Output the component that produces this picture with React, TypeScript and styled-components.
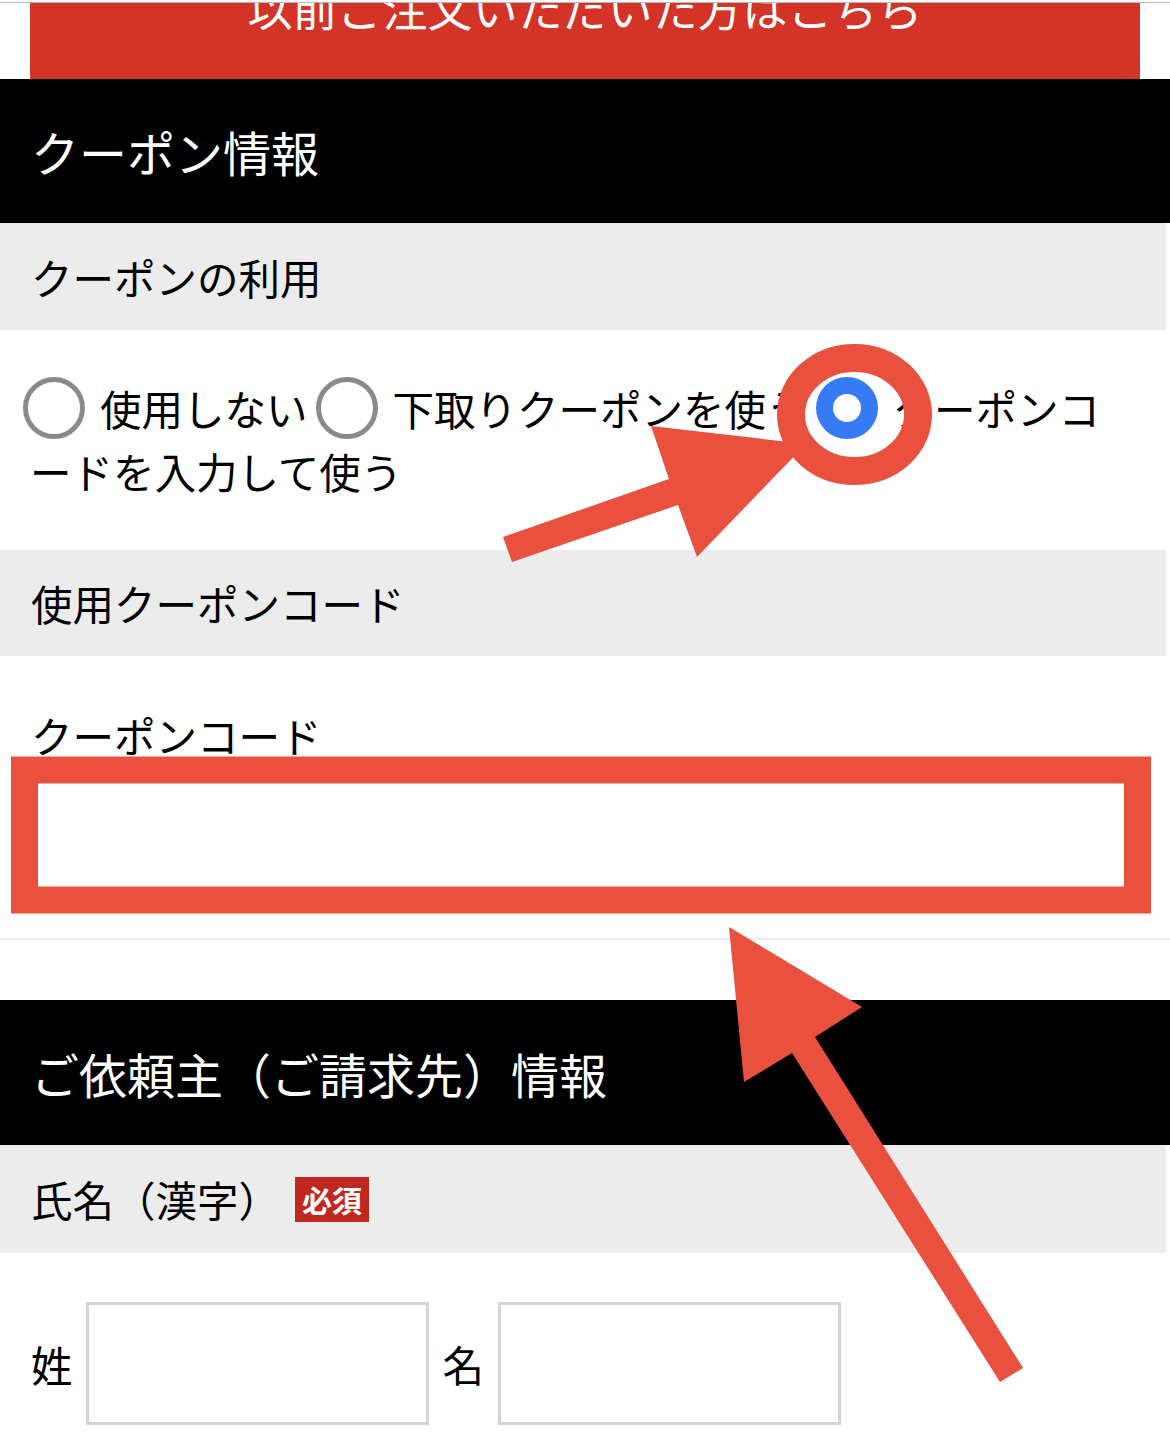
import styled, { createGlobalStyle } from 'styled-components'

const GlobalStyle = createGlobalStyle`
  html, body {
    margin: 0;
    padding: 0;
    overflow: hidden;
    background: #fff;
  }
  body {
    font-family: "Noto Sans CJK JP", "Noto Sans", sans-serif;
    color: #000;
  }
`

const Page = styled.div`
  position: relative;
  width: 1170px;
  height: 1437px;
  overflow: hidden;
  background: #fff;
`

const TopRule = styled.div`
  margin-top: 2px;
  height: 1px;
  background: #b8b8b8;
`

const ReorderButton = styled.div`
  margin: 0 30px;
  height: 76px;
  overflow: hidden;
  background: #d43327;
  color: #fff;
  text-align: center;
  font-size: 45px;
  line-height: 45px;
  white-space: nowrap;
`

const ReorderText = styled.span`
  display: block;
  margin-top: -18px;
`

const SectionHeader = styled.div<{ $height: number }>`
  display: flex;
  align-items: center;
  height: ${p => p.$height}px;
  padding-left: 31px;
  background: #000;
  color: #fff;
  font-size: 48px;
`

const FieldTitle = styled.div<{ $height: number }>`
  display: flex;
  align-items: center;
  height: ${p => p.$height}px;
  margin-right: 4px;
  padding-left: 31px;
  background: #ececec;
  font-size: 41.5px;
`

const RequiredBadge = styled.span`
  margin-left: 15px;
  padding: 0 7px;
  height: 45px;
  line-height: 45px;
  background: #c0271f;
  color: #fff;
  font-size: 30px;
  font-weight: 700;
`

const RadioGroup = styled.div`
  padding: 47px 35px 47px 30px;
  font-size: 41.5px;
  line-height: 63px;
  line-break: anywhere;
`

const RadioLabel = styled.label`
  cursor: pointer;
`

const Radio = styled.span<{ $checked?: boolean; $first?: boolean }>`
  display: inline-block;
  vertical-align: top;
  position: relative;
  box-sizing: border-box;
  width: 62px;
  height: 62px;
  margin: 0 15px 0 ${p => (p.$first ? '-7px' : '8px')};
  border-radius: 50%;
  border: ${p => (p.$checked ? 'none' : '5px solid #8a8a8a')};
  background: ${p => (p.$checked ? '#367bf5' : '#fff')};

  &::after {
    content: '';
    display: ${p => (p.$checked ? 'block' : 'none')};
    position: absolute;
    left: 17px;
    top: 17px;
    width: 28px;
    height: 28px;
    border-radius: 50%;
    background: #fff;
  }
`

const CodeSection = styled.div`
  padding: 48px 32px 38px 31px;
  border-bottom: 2px solid #ebebeb;
`

const FieldLabel = styled.div`
  font-size: 41.5px;
  line-height: 62px;
`

const CodeInput = styled.input`
  display: block;
  box-sizing: border-box;
  width: calc(100% + 12px);
  height: 130px;
  margin: 4px -6px 0;
  border: 2px solid #d0d0d0;
  background: #fff;
  font-size: 40px;
  outline: none;
`

const Spacer = styled.div`
  height: 60px;
`

const NameRow = styled.div`
  display: flex;
  align-items: center;
  gap: 13.5px;
  padding: 49px 0 0 31px;
  font-size: 41.5px;
`

const NameInput = styled.input`
  box-sizing: border-box;
  width: 343px;
  height: 123px;
  margin: 0;
  border: 3px solid #d4d4d4;
  background: #fff;
  font-size: 40px;
  outline: none;
`

const Annotations = styled.svg`
  position: absolute;
  left: 0;
  top: 0;
  pointer-events: none;
`

const MARK = '#e9503e'

export default function App() {
  return (
    <Page>
      <GlobalStyle />
      <TopRule />
      <ReorderButton>
        <ReorderText>以前ご注文いただいた方はこちら</ReorderText>
      </ReorderButton>

      <SectionHeader $height={144}>クーポン情報</SectionHeader>
      <FieldTitle $height={107}>クーポンの利用</FieldTitle>
      <RadioGroup>
        <RadioLabel><Radio $first />使用しない</RadioLabel>
        <RadioLabel><Radio />下取りクーポンを使う</RadioLabel>
        <RadioLabel><Radio $checked />クーポンコードを入力して使う</RadioLabel>
      </RadioGroup>

      <FieldTitle $height={106}>使用クーポンコード</FieldTitle>
      <CodeSection>
        <FieldLabel>クーポンコード</FieldLabel>
        <CodeInput type="text" />
      </CodeSection>
      <Spacer />

      <SectionHeader $height={145}>ご依頼主（ご請求先）情報</SectionHeader>
      <FieldTitle $height={108}>
        氏名（漢字）<RequiredBadge>必須</RequiredBadge>
      </FieldTitle>
      <NameRow>
        <span>姓</span>
        <NameInput type="text" />
        <span>名</span>
        <NameInput type="text" />
      </NameRow>

      <Annotations width="1170" height="1437" viewBox="0 0 1170 1437">
        <polygon
          fill={MARK}
          points="503,537 669,479 651,426 806,444 697,557 678,505 512,562"
        />
        <ellipse cx="854.5" cy="414.5" rx="63.5" ry="56.5" fill="none" stroke={MARK} strokeWidth="28" />
        <rect x="24.5" y="770" width="1113" height="130" fill="none" stroke={MARK} strokeWidth="27" />
        <polygon
          fill={MARK}
          points="729,927 862,1007 815,1037 1023,1368 1000,1382 792,1053 744,1082"
        />
      </Annotations>
    </Page>
  )
}
